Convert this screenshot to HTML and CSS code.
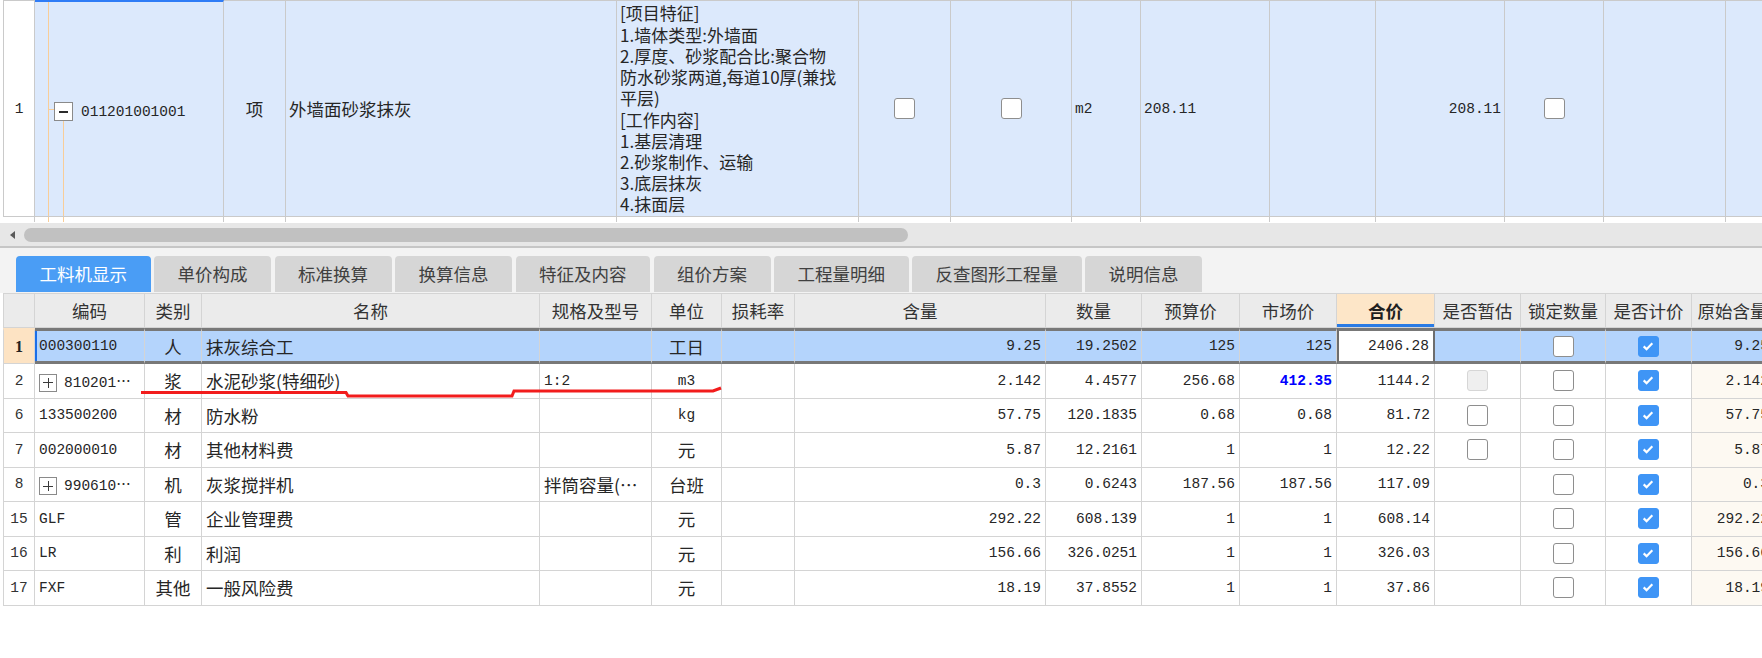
FILE: index.html
```html
<!DOCTYPE html>
<html lang="zh-CN">
<head>
    <meta charset="UTF-8">
    <title>工料机显示</title>
    <link rel="stylesheet" href="styles.css">
</head>
<body>
    <div class="pane">
        <table class="bill">
            <colgroup>
                <col style="width:32px"><col style="width:189px"><col style="width:62px"><col style="width:331px">
                <col style="width:242px"><col style="width:92px"><col style="width:121px"><col style="width:69px">
                <col style="width:129px"><col style="width:106px"><col style="width:129px"><col style="width:99px">
                <col style="width:122px"><col style="width:80px">
            </colgroup>
            <tr class="main">
                <td class="rn">1</td>
                <td class="code"><span class="tbox minus"></span><span class="mono">011201001001</span></td>
                <td class="c">项</td>
                <td>外墙面砂浆抹灰</td>
                <td class="desc">[项目特征]<br>1.墙体类型:外墙面<br>2.厚度、砂浆配合比:聚合物<br>防水砂浆两道,每道10厚(兼找<br>平层)<br>[工作内容]<br>1.基层清理<br>2.砂浆制作、运输<br>3.底层抹灰<br>4.抹面层</td>
                <td class="c"><span class="cb"></span></td>
                <td class="c"><span class="cb"></span></td>
                <td class="mono">m2</td>
                <td class="mono">208.11</td>
                <td></td>
                <td class="mono r">208.11</td>
                <td class="c"><span class="cb"></span></td>
                <td></td>
                <td></td>
            </tr>
            <tr class="tail">
                <td></td><td class="code"></td><td></td><td></td><td></td><td></td><td></td>
                <td></td><td></td><td></td><td></td><td></td><td></td><td></td>
            </tr>
        </table>
    </div>

    <div class="hscroll">
        <span class="arrow"></span>
        <span class="thumb"></span>
    </div>

    <div class="tabs">
        <div class="tab active">工料机显示</div>
        <div class="tab">单价构成</div>
        <div class="tab">标准换算</div>
        <div class="tab">换算信息</div>
        <div class="tab">特征及内容</div>
        <div class="tab">组价方案</div>
        <div class="tab">工程量明细</div>
        <div class="tab">反查图形工程量</div>
        <div class="tab">说明信息</div>
    </div>

    <div class="pane lower">
        <table class="grid">
            <colgroup>
                <col style="width:32px"><col style="width:110px"><col style="width:57px"><col style="width:338px">
                <col style="width:112px"><col style="width:70px"><col style="width:73px"><col style="width:251px">
                <col style="width:96px"><col style="width:98px"><col style="width:97px"><col style="width:98px">
                <col style="width:86px"><col style="width:85px"><col style="width:86px"><col style="width:82px">
            </colgroup>
            <tr class="head">
                <th class="rn"></th>
                <th>编码</th>
                <th>类别</th>
                <th>名称</th>
                <th>规格及型号</th>
                <th>单位</th>
                <th>损耗率</th>
                <th>含量</th>
                <th>数量</th>
                <th>预算价</th>
                <th>市场价</th>
                <th class="hot">合价</th>
                <th>是否暂估</th>
                <th>锁定数量</th>
                <th>是否计价</th>
                <th>原始含量</th>
            </tr>
            <tr class="sel">
                <td class="rn">1</td>
                <td class="mono first">000300110</td>
                <td class="c">人</td>
                <td>抹灰综合工</td>
                <td></td>
                <td class="c">工日</td>
                <td></td>
                <td class="n">9.25</td>
                <td class="n">19.2502</td>
                <td class="n">125</td>
                <td class="n">125</td>
                <td class="n edit">2406.28</td>
                <td></td>
                <td class="c"><span class="cb"></span></td>
                <td class="c"><span class="cb on"><svg viewBox="0 0 20 20"><path d="M5.2 10.4l3.2 3.1 6.4-6.6"/></svg></span></td>
                <td class="n orig">9.25</td>
            </tr>
            <tr>
                <td class="rn">2</td>
                <td class="mono"><span class="tbox plus"></span>810201⋯</td>
                <td class="c">浆</td>
                <td>水泥砂浆(特细砂)</td>
                <td class="mono">1:2</td>
                <td class="c mono">m3</td>
                <td></td>
                <td class="n">2.142</td>
                <td class="n">4.4577</td>
                <td class="n">256.68</td>
                <td class="n blue">412.35</td>
                <td class="n">1144.2</td>
                <td class="c"><span class="cb dim"></span></td>
                <td class="c"><span class="cb"></span></td>
                <td class="c"><span class="cb on"><svg viewBox="0 0 20 20"><path d="M5.2 10.4l3.2 3.1 6.4-6.6"/></svg></span></td>
                <td class="n orig">2.142</td>
            </tr>
            <tr>
                <td class="rn">6</td>
                <td class="mono">133500200</td>
                <td class="c">材</td>
                <td>防水粉</td>
                <td></td>
                <td class="c mono">kg</td>
                <td></td>
                <td class="n">57.75</td>
                <td class="n">120.1835</td>
                <td class="n">0.68</td>
                <td class="n">0.68</td>
                <td class="n">81.72</td>
                <td class="c"><span class="cb"></span></td>
                <td class="c"><span class="cb"></span></td>
                <td class="c"><span class="cb on"><svg viewBox="0 0 20 20"><path d="M5.2 10.4l3.2 3.1 6.4-6.6"/></svg></span></td>
                <td class="n orig">57.75</td>
            </tr>
            <tr>
                <td class="rn">7</td>
                <td class="mono">002000010</td>
                <td class="c">材</td>
                <td>其他材料费</td>
                <td></td>
                <td class="c">元</td>
                <td></td>
                <td class="n">5.87</td>
                <td class="n">12.2161</td>
                <td class="n">1</td>
                <td class="n">1</td>
                <td class="n">12.22</td>
                <td class="c"><span class="cb"></span></td>
                <td class="c"><span class="cb"></span></td>
                <td class="c"><span class="cb on"><svg viewBox="0 0 20 20"><path d="M5.2 10.4l3.2 3.1 6.4-6.6"/></svg></span></td>
                <td class="n orig">5.87</td>
            </tr>
            <tr>
                <td class="rn">8</td>
                <td class="mono"><span class="tbox plus"></span>990610⋯</td>
                <td class="c">机</td>
                <td>灰浆搅拌机</td>
                <td>拌筒容量(⋯</td>
                <td class="c">台班</td>
                <td></td>
                <td class="n">0.3</td>
                <td class="n">0.6243</td>
                <td class="n">187.56</td>
                <td class="n">187.56</td>
                <td class="n">117.09</td>
                <td></td>
                <td class="c"><span class="cb"></span></td>
                <td class="c"><span class="cb on"><svg viewBox="0 0 20 20"><path d="M5.2 10.4l3.2 3.1 6.4-6.6"/></svg></span></td>
                <td class="n orig">0.3</td>
            </tr>
            <tr>
                <td class="rn">15</td>
                <td class="mono">GLF</td>
                <td class="c">管</td>
                <td>企业管理费</td>
                <td></td>
                <td class="c">元</td>
                <td></td>
                <td class="n">292.22</td>
                <td class="n">608.139</td>
                <td class="n">1</td>
                <td class="n">1</td>
                <td class="n">608.14</td>
                <td></td>
                <td class="c"><span class="cb"></span></td>
                <td class="c"><span class="cb on"><svg viewBox="0 0 20 20"><path d="M5.2 10.4l3.2 3.1 6.4-6.6"/></svg></span></td>
                <td class="n orig">292.22</td>
            </tr>
            <tr>
                <td class="rn">16</td>
                <td class="mono">LR</td>
                <td class="c">利</td>
                <td>利润</td>
                <td></td>
                <td class="c">元</td>
                <td></td>
                <td class="n">156.66</td>
                <td class="n">326.0251</td>
                <td class="n">1</td>
                <td class="n">1</td>
                <td class="n">326.03</td>
                <td></td>
                <td class="c"><span class="cb"></span></td>
                <td class="c"><span class="cb on"><svg viewBox="0 0 20 20"><path d="M5.2 10.4l3.2 3.1 6.4-6.6"/></svg></span></td>
                <td class="n orig">156.66</td>
            </tr>
            <tr>
                <td class="rn">17</td>
                <td class="mono">FXF</td>
                <td class="c">其他</td>
                <td>一般风险费</td>
                <td></td>
                <td class="c">元</td>
                <td></td>
                <td class="n">18.19</td>
                <td class="n">37.8552</td>
                <td class="n">1</td>
                <td class="n">1</td>
                <td class="n">37.86</td>
                <td></td>
                <td class="c"><span class="cb"></span></td>
                <td class="c"><span class="cb on"><svg viewBox="0 0 20 20"><path d="M5.2 10.4l3.2 3.1 6.4-6.6"/></svg></span></td>
                <td class="n orig">18.19</td>
            </tr>
        </table>
    </div>

    <!-- hand-drawn red mark over row 2 -->
    <svg class="mark" width="1762" height="658" viewBox="0 0 1762 658">
        <path d="M141 392.5 L346 392.5 L348 396 L512 396 L514 391 L713 391 L721 388"/>
    </svg>
</body>
</html>
```

FILE: styles.css
```css
* {
    box-sizing: border-box;
}
body {
    margin: 0;
    width: 1762px;
    height: 658px;
    overflow: hidden;
    position: relative;
    background: #fff;
    color: #262626;
    font-family: "Noto Sans CJK SC", sans-serif;
    font-size: 17.5px;
}
.pane {
    width: 1762px;
    overflow: hidden;
}
table {
    border-collapse: separate;
    border-spacing: 0;
    table-layout: fixed;
    margin-left: 3px;
}
td, th {
    padding: 0 4px;
    white-space: nowrap;
    overflow: hidden;
    border-right: 1px solid #cacaca;
    border-bottom: 1px solid #cacaca;
    vertical-align: middle;
    text-align: left;
    font-weight: normal;
}
.c {
    text-align: center;
}
.r {
    text-align: right;
}
.mono {
    font-family: "Liberation Mono", "Noto Sans CJK SC", monospace;
    font-size: 14.5px;
}

/* upper bill row */
.bill {
    width: 1803px;
}
.bill td {
    background: #dce9fc;
    border-top: 1px solid #cacaca;
    padding: 0 3px;
}
.bill .main {
    height: 217px;
}
.bill .rn {
    background: #fff;
    border-left: 1px solid #cacaca;
    text-align: center;
    font-family: "Liberation Mono", monospace;
    font-size: 14.5px;
}
.bill .main .code {
    border-top: 2px solid #2f7cf6;
    padding-left: 19px;
    background:
        linear-gradient(#f8cd98, #f8cd98) 13px 0 / 1px 100% no-repeat,
        linear-gradient(#f8cd98, #f8cd98) 14px 50% / 5px 1px no-repeat,
        linear-gradient(#f8cd98, #f8cd98) 28px 116px / 1px 100% no-repeat,
        #dce9fc;
}
.bill .main .code .mono {
    margin-left: 8px;
    vertical-align: middle;
}
.bill .desc {
    font-size: 17px;
    line-height: 21.2px;
}
.bill .tail {
    height: 5px;
}
.bill .tail td {
    background: #fff;
    border-top: 0;
    border-bottom: 0;
}
.bill .tail .code {
    background:
        linear-gradient(#f8cd98, #f8cd98) 13px 0 / 1px 100% no-repeat,
        linear-gradient(#f8cd98, #f8cd98) 28px 0 / 1px 100% no-repeat,
        #fff;
}
.bill .tail .rn {
    border-left: 1px solid #cacaca;
}

.tbox {
    display: inline-block;
    width: 19px;
    height: 19px;
    border: 1px solid #8a8a8a;
    vertical-align: middle;
}
.tbox.minus {
    background: linear-gradient(#2b2b2b, #2b2b2b) center / 9px 2px no-repeat, #fff;
}
.tbox.plus {
    width: 18px;
    height: 18px;
    margin-right: 7px;
    background:
        linear-gradient(#3a3a3a, #3a3a3a) center / 10px 1px no-repeat,
        linear-gradient(#3a3a3a, #3a3a3a) center / 1px 10px no-repeat,
        #fff;
}

/* checkbox */
.cb {
    display: block;
    margin: 0 auto;
    width: 21px;
    height: 21px;
    border: 1.5px solid #8e8e8e;
    border-radius: 3px;
    background: #fff;
}
.cb.on {
    background: #3f95f6;
    border-color: #3f95f6;
}
.cb.on svg {
    display: block;
    width: 18px;
    height: 18px;
}
.cb.on path {
    fill: none;
    stroke: #fff;
    stroke-width: 2.4;
}
.cb.dim {
    background: #efefef;
    border-color: #d6d6d6;
}

/* scroll bar */
.hscroll {
    height: 26px;
    background: #e7e7e7;
    border-top: 1px solid #fff;
    border-bottom: 2px solid #c6c6c6;
    display: flex;
    align-items: center;
    padding-left: 10px;
}
.arrow {
    width: 0;
    height: 0;
    border-right: 5px solid #5a5a5a;
    border-top: 4px solid transparent;
    border-bottom: 4px solid transparent;
}
.thumb {
    width: 884px;
    height: 14px;
    margin-left: 9px;
    border-radius: 7px;
    background: #c1c1c1;
}

/* tabs */
.tabs {
    height: 45px;
    background: #f3f3f3;
    padding: 8px 0 1px 16px;
    display: flex;
    gap: 3.5px;
}
.tab {
    height: 36px;
    line-height: 36px;
    padding: 0 23.5px;
    background: #d6d6d6;
    color: #404040;
    border-radius: 4px 4px 0 0;
}
.tab.active {
    background: #4a9df5;
    color: #fff;
}

/* lower grid */
.lower {
    height: 365px;
}
.grid {
    width: 1771px;
}
.grid .head {
    height: 35px;
}
.grid th {
    background: #ebebeb;
    color: #333;
    text-align: center;
    border-top: 1px solid #d4d4d4;
    border-right-color: #d4d4d4;
    border-bottom-color: #d4d4d4;
}
.grid th.hot {
    background: #fde6c8;
    color: #1f1f1f;
    font-weight: bold;
    box-shadow: inset 0 -3px 0 #2a7be4;
}
.grid tr {
    height: 34.5px;
}
.grid td {
    border-right-color: #d4d4d4;
    border-bottom-color: #d4d4d4;
}
.grid .rn {
    border-left: 1px solid #d4d4d4;
    padding: 0;
    text-align: center;
    font-family: "Liberation Mono", monospace;
    font-size: 14.5px;
    color: #333;
}
.grid .n {
    font-family: "Liberation Mono", monospace;
    font-size: 14.5px;
    text-align: right;
}
.grid .mono.c {
    text-align: center;
}
.grid .orig {
    background: #fdf9f2;
}
.grid .blue {
    color: #0000ff;
    font-weight: bold;
}
.grid tr.sel {
    height: 36px;
}
.grid .sel td {
    background: #b4d4fc;
    border-top: 3px solid #787878;
    border-bottom: 3px solid #787878;
}
.grid .sel td.rn {
    background: #fde3c3;
    border-top-color: #fde3c3;
    border-bottom: 1px solid #d4d4d4;
    font-family: "Liberation Serif", serif;
    font-weight: bold;
    font-size: 16px;
    color: #222;
}
.grid .sel td.first {
    box-shadow: inset 2px 0 0 #1b6ee8;
}
.grid .sel td.edit {
    background: #fff;
    border-left: 2px solid #6e6e6e;
    border-right: 2px solid #6e6e6e;
}

.mark {
    position: absolute;
    left: 0;
    top: 0;
    pointer-events: none;
}
.mark path {
    fill: none;
    stroke: #f21c1c;
    stroke-width: 3;
}
```
